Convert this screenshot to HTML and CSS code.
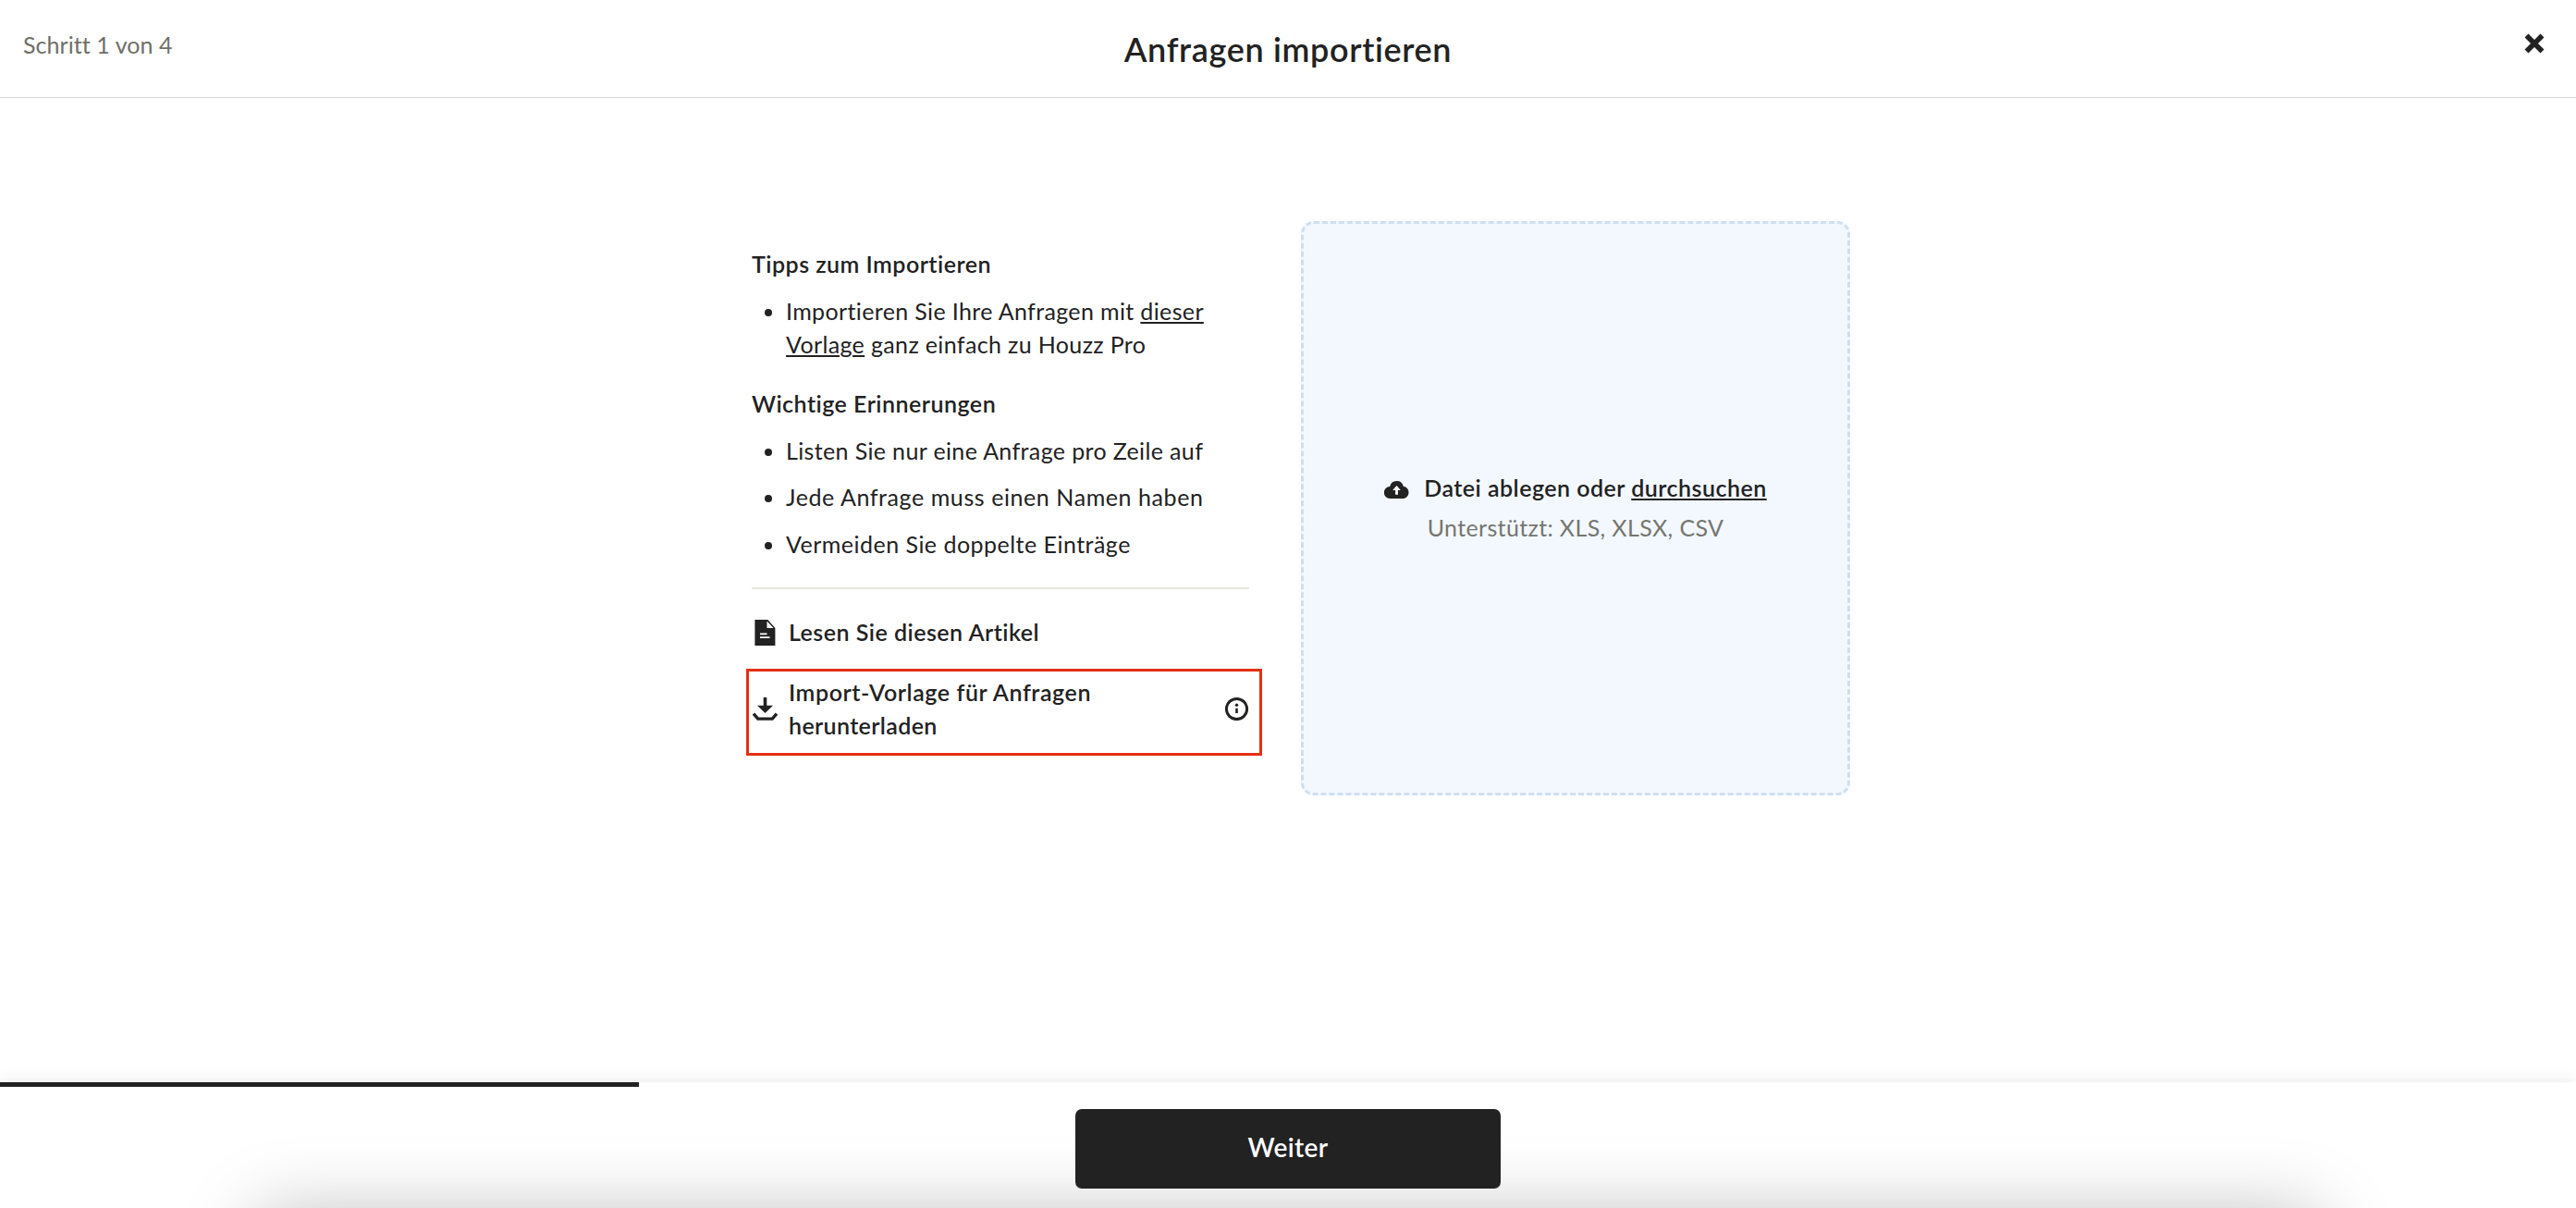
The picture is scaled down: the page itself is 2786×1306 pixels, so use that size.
FILE: index.html
```html
<!DOCTYPE html>
<html lang="de">
<head>
<meta charset="utf-8">
<title>Anfragen importieren</title>
<link rel="stylesheet" href="styles.css">
</head>
<body>
<header class="header">
  <span class="step">Schritt 1 von 4</span>
  <h1 class="title">Anfragen importieren</h1>
  <button class="close" aria-label="Schließen">
    <svg width="22" height="22" viewBox="0 0 22 22"><path d="M2.500 2.500l17 17M19.500 2.500l-17 17" stroke="#222" stroke-width="5.600" fill="none"/></svg>
  </button>
</header>
<main class="main">
  <section class="tips">
    <h2 class="heading">Tipps zum Importieren</h2>
    <ul class="list">
      <li class="snug">Importieren Sie Ihre Anfragen mit <a class="link">dieser</a><br><a class="link">Vorlage</a> ganz einfach zu Houzz Pro</li>
    </ul>
    <h2 class="heading">Wichtige Erinnerungen</h2>
    <ul class="list reminders">
      <li class="snug">Listen Sie nur eine Anfrage pro Zeile auf</li>
      <li class="wide">Jede Anfrage muss einen Namen haben</li>
      <li>Vermeiden Sie doppelte Einträge</li>
    </ul>
    <hr class="rule">
    <a class="action article">
      <svg class="icon" width="28" height="28" viewBox="0 0 28 28"><path d="M3.400 0h14l8 9v19h-22z" fill="#222"/><path d="M16.500 1.400V9h7z" fill="#fff"/><path d="M9 15.400h7.500M9 19.200h10.500" stroke="#fff" stroke-width="1.700"/></svg>
      <span class="action-label">Lesen Sie diesen Artikel</span>
    </a>
    <a class="action download">
      <svg class="icon" width="28" height="28" viewBox="0 0 28 28"><path d="M12.700 2h3.600v8.800h6.700L14.500 19 6 10.800h6.700z" fill="#222"/><path d="M2 19.600l4.700 5.500h15.600l4.700-5.500" stroke="#222" stroke-width="3.400" fill="none"/></svg>
      <span class="action-label"><span class="wide">Import-Vorlage für Anfragen</span><br><span class="snug">herunterladen</span></span>
      <svg class="info" width="26" height="26" viewBox="0 0 26 26"><circle cx="12.500" cy="13.500" r="11.100" fill="none" stroke="#222" stroke-width="3"/><circle cx="12.500" cy="9.200" r="1.700" fill="#222"/><path d="M12.500 12.700v5.300" stroke="#222" stroke-width="2.600"/></svg>
    </a>
  </section>
  <section class="dropzone">
    <div class="drop-title">
      <svg class="cloud" width="27" height="21" viewBox="0 0 27 21"><path d="M6.500 21a6.500 6.500 0 0 1-.3-13A7.500 7.500 0 0 1 20.800 7.700 6.700 6.700 0 0 1 20.500 21z" fill="#222"/><path d="M13.500 7l4.300 5h-2.900v4.800h-2.800V12H9.200z" fill="#fff"/></svg>
      <span>Datei ablegen oder <a class="link">durchsuchen</a></span>
    </div>
    <div class="drop-hint snug">Unterstützt: XLS, XLSX, CSV</div>
  </section>
</main>
<footer class="footer">
  <div class="fold-shadow"></div>
  <div class="progress"><div class="progress-bar"></div></div>
  <button class="next">Weiter</button>
</footer>
</body>
</html>
```
FILE: styles.css
```css
* { box-sizing: border-box; }
body {
  margin: 0;
  width: 2786px;
  height: 1306px;
  overflow: hidden;
  display: flex;
  flex-direction: column;
  background: #fff;
  color: #222;
  font: 400 25px/36px Lato, "Liberation Sans", sans-serif;
  letter-spacing: .48px;
  font-variant-ligatures: none;
}
h1, h2, ul { margin: 0; padding: 0; }
.snug { letter-spacing: .36px; }
.wide { letter-spacing: .58px; }

.header {
  height: 106px;
  border-bottom: 1px solid #d6d6d6;
  display: grid;
  grid-template-columns: 1fr auto 1fr;
  padding: 0 34px 0 25px;
}
.step { color: #6f7068; padding-top: 30px; letter-spacing: .06px; }
.title { font-size: 36px; font-weight: 600; line-height: 44px; letter-spacing: .65px; padding: 31px 0 0 9px; }
.close { justify-self: end; align-self: start; border: 0; background: none; padding: 0; margin-top: 36px; height: 22px; }
.close svg, .icon, .info, .cloud { display: block; }

.main {
  flex: 1;
  display: grid;
  grid-template-columns: 538px 594px;
  column-gap: 56px;
  align-content: start;
  padding: 133px 0 0 813px;
}
.tips { padding-top: 28px; }
.heading { font-size: 25px; font-weight: 600; line-height: 36px; margin-bottom: 15px; }
.list { padding-left: 37px; margin-bottom: 28px; }
.list li { margin-bottom: 14px; }
.list.reminders { margin-bottom: 29px; }
.list.reminders li:last-child { margin-top: 15px; }
.link { text-decoration: underline; text-decoration-thickness: 2px; text-underline-offset: 2px; }
.rule { border: 0; height: 2px; background: #e6e6dc; margin: 0; }
.action { display: flex; align-items: center; font-weight: 600; }
.action-label { flex: 1; margin-left: 12px; }
.article { margin-top: 28px; }
.article .icon { margin-top: 2px; }
.download {
  height: 94px;
  margin: 22px -14px 0 -6px;
  padding: 0 11px 8px 3px;
  border: 3px solid #e43012;
}

.dropzone {
  height: 621px;
  padding-bottom: 2px;
  border: 3px dashed #d0dff0;
  border-radius: 14px;
  background: #f3f8fe;
  display: flex;
  flex-direction: column;
  align-items: center;
  justify-content: center;
  gap: 7px;
}
.drop-title { display: flex; align-items: center; gap: 16px; font-weight: 600; }
.cloud { margin-top: 2px; }
.drop-hint { color: #757670; }

.footer {
  position: relative;
  height: 136px;
  background: #fff;
  box-shadow: 0 0 16px rgba(0, 0, 0, .1);
  display: flex;
  flex-direction: column;
  align-items: center;
}
/* Soft shadow cast from below the fold */
.fold-shadow { position: absolute; inset: 0; overflow: hidden; }
.fold-shadow::before {
  content: "";
  position: absolute;
  left: 280px;
  right: 280px;
  top: 144px;
  height: 300px;
  box-shadow: 0 0 76px rgba(0, 0, 0, .27);
}
.progress { width: 100%; height: 5px; }
.progress-bar { width: 691px; height: 5px; background: #222; }
.next {
  position: relative;
  margin-top: 24px;
  width: 460px;
  height: 86px;
  padding: 0 0 4px;
  border: 0;
  border-radius: 7px;
  background: #222;
  color: #fff;
  font: 600 28px/40px Lato, "Liberation Sans", sans-serif;
  letter-spacing: .4px;
}
```
